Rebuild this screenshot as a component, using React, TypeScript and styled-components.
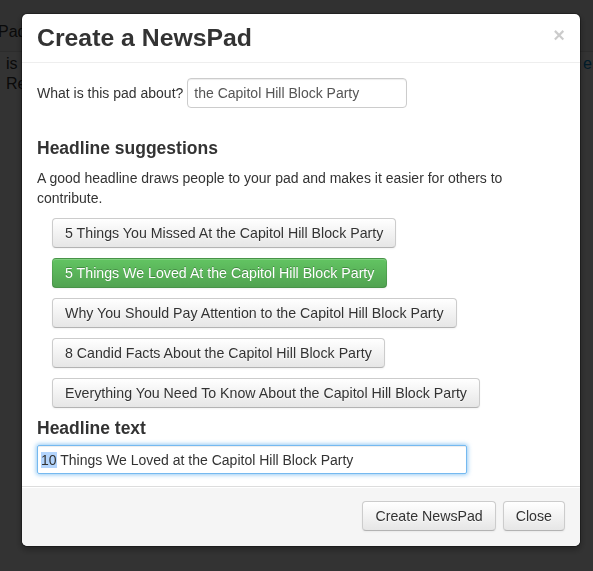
import styled, { createGlobalStyle } from 'styled-components';

const suggestions = [
    "5 Things You Missed At the Capitol Hill Block Party",
    "5 Things We Loved At the Capitol Hill Block Party",
    "Why You Should Pay Attention to the Capitol Hill Block Party",
    "8 Candid Facts About the Capitol Hill Block Party",
    "Everything You Need To Know About the Capitol Hill Block Party",
];

const GlobalStyle = createGlobalStyle`
    html, body {
        margin: 0;
        padding: 0;
        background: #fff;
        font-family: "Liberation Sans", Arial, Helvetica, sans-serif;
        font-size: 14px;
        line-height: 20px;
        color: #333;
        overflow: hidden;
    }
`;

// the page that sits behind the backdrop
const Page = styled.div`
    width: 593px;
    height: 571px;
`;

const TopBar = styled.div`
    box-sizing: border-box;
    height: 52px;
    padding-bottom: 9px;
    background: #f5f5f5;
    border-bottom: 1px solid #ddd;
    display: flex;
    align-items: flex-end;
    font-size: 16px;
    margin-left: -2px;
`;

const PageRow = styled.div`
    display: grid;
    grid-template-columns: 583px 1fr;
    padding-top: 2px;
`;

const PageText = styled.p`
    margin: 0;
    font-size: 16px;
    line-height: 20px;
    margin-left: 6px;
`;

const PageLink = styled.a`
    color: #08c;
    font-size: 16px;
`;

const Backdrop = styled.div`
    position: fixed;
    inset: 0;
    background: rgba(0, 0, 0, 0.8);
`;

const Modal = styled.div`
    position: fixed;
    top: 13px;
    left: 21px;
    width: 558px;
    background: #fff;
    border: 1px solid rgba(0, 0, 0, 0.3);
    border-radius: 6px;
    box-shadow: 0 3px 7px rgba(0, 0, 0, 0.3);
    display: flex;
    flex-direction: column;
    background-clip: padding-box;
`;

const Header = styled.div`
    padding: 9px 15px;
    border-bottom: 1px solid #eee;
    display: flex;
    align-items: flex-start;
    justify-content: space-between;
`;

const Title = styled.h3`
    margin: 0;
    font-size: 24.8px;
    line-height: 30px;
    font-weight: bold;
    color: #333;
`;

const CloseX = styled.button`
    border: 0;
    background: none;
    padding: 0;
    margin-top: 2px;
    font-family: "Liberation Sans", Arial, sans-serif;
    font-size: 20px;
    font-weight: bold;
    line-height: 20px;
    color: #000;
    opacity: 0.2;
    text-shadow: 0 1px 0 #fff;
    cursor: pointer;
`;

const Body = styled.div`
    padding: 15px 15px 12px;
`;

const AboutRow = styled.form`
    display: flex;
    align-items: center;
    gap: 4px;
    margin: 0 0 30px;
`;

const TextInput = styled.input`
    box-sizing: border-box;
    height: 30px;
    width: 220px;
    padding: 4px 6px;
    font-family: "Liberation Sans", Arial, sans-serif;
    font-size: 14px;
    line-height: 20px;
    color: #555;
    border: 1px solid #ccc;
    border-radius: 4px;
    box-shadow: inset 0 1px 1px rgba(0, 0, 0, 0.075);
    outline: none;
`;

const SectionTitle = styled.h4<{ tight?: boolean }>`
    margin: 10px 0 ${props => props.tight ? "7px" : "10px"};
    font-size: 17.5px;
    line-height: 20px;
    font-weight: bold;
`;

const Intro = styled.p`
    margin: 0 0 10px;
`;

const SuggestionList = styled.div`
    margin-left: 15px;
    display: flex;
    flex-direction: column;
    align-items: flex-start;
    gap: 10px;
    margin-bottom: 8px;
`;

const Button = styled.button<{ success?: boolean }>`
    box-sizing: border-box;
    height: 30px;
    padding: 4px 12px;
    font-family: "Liberation Sans", Arial, sans-serif;
    font-size: 14.2px;
    line-height: 20px;
    border-radius: 4px;
    cursor: pointer;
    ${props => props.success ? `
        color: #fff;
        text-shadow: 0 -1px 0 rgba(0, 0, 0, 0.25);
        background: linear-gradient(to bottom, #62c462, #51a351);
        border: 1px solid rgba(0, 0, 0, 0.1);
        border-bottom-color: rgba(0, 0, 0, 0.25);
    ` : `
        color: #333;
        text-shadow: 0 1px 1px rgba(255, 255, 255, 0.75);
        background: linear-gradient(to bottom, #fff, #e6e6e6);
        border: 1px solid #ccc;
        border-bottom-color: #b3b3b3;
    `}
    box-shadow: inset 0 1px 0 rgba(255, 255, 255, 0.2), 0 1px 2px rgba(0, 0, 0, 0.05);
`;

const HeadlineField = styled.div`
    box-sizing: border-box;
    height: 29px;
    width: 430px;
    padding: 4px 3px;
    font-size: 14px;
    line-height: 20px;
    color: #333;
    border: 1px solid rgba(82, 168, 236, 0.8);
    border-radius: 2px;
    box-shadow: inset 0 1px 1px rgba(0, 0, 0, 0.075), 0 0 4px 1px rgba(82, 168, 236, 0.6);
    white-space: nowrap;
`;

const Selected = styled.span`
    background: #b3d4fc;
`;

const Footer = styled.div`
    padding: 14px 15px 15px;
    background: #f5f5f5;
    border-top: 1px solid #ddd;
    border-radius: 0 0 6px 6px;
    box-shadow: inset 0 1px 0 #fff;
    display: flex;
    justify-content: flex-end;
    gap: 7px;
`;

const App = () => {
    return (
        <>
            <GlobalStyle />
            <Page>
                <TopBar>Pad</TopBar>
                <PageRow>
                    <PageText>is edited by the community.<br />Results</PageText>
                    <PageLink>err</PageLink>
                </PageRow>
            </Page>
            <Backdrop />
            <Modal>
                <Header>
                    <Title>Create a NewsPad</Title>
                    <CloseX>×</CloseX>
                </Header>
                <Body>
                    <AboutRow onSubmit={e => e.preventDefault()}>
                        <label>What is this pad about?</label>
                        <TextInput defaultValue="the Capitol Hill Block Party" />
                    </AboutRow>
                    <SectionTitle>Headline suggestions</SectionTitle>
                    <Intro>A good headline draws people to your pad and makes it easier for others to contribute.</Intro>
                    <SuggestionList>
                        {suggestions.map((s, i) => (
                            <Button key={s} success={i === 1}>{s}</Button>
                        ))}
                    </SuggestionList>
                    <SectionTitle tight>Headline text</SectionTitle>
                    <HeadlineField>
                        <Selected>10</Selected> Things We Loved at the Capitol Hill Block Party
                    </HeadlineField>
                </Body>
                <Footer>
                    <Button>Create NewsPad</Button>
                    <Button>Close</Button>
                </Footer>
            </Modal>
        </>
    )
}

export default App
